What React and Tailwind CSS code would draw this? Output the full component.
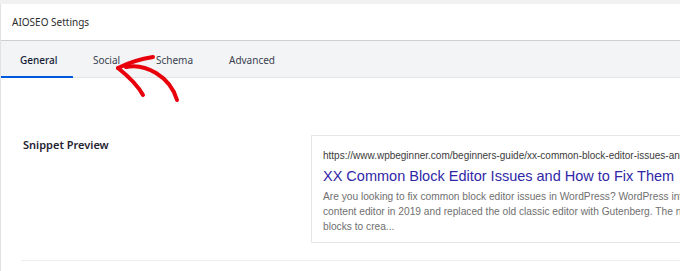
import React from 'react';

const tabs = [
    { label: 'General', cls: 'w-[72px] pl-[19px] font-medium text-[#141b38]' },
    { label: 'Social', cls: 'ml-[20px] w-[63px] text-[#3a3f4f]' },
    { label: 'Schema', cls: 'w-[73px] text-[#3a3f4f]' },
    { label: 'Advanced', cls: 'text-[#3a3f4f]' },
];

const Arrow = () => (
    <svg className="absolute left-[100px] top-[48px] pointer-events-none" width="90" height="60" viewBox="0 0 90 60" fill="none">
        <g stroke="#e8000b" strokeWidth="4" strokeLinecap="round" strokeLinejoin="round">
            <path d="M18 20 C 28 15, 40 11, 53 9" />
            <path d="M18 20 C 28 28, 38 38, 43 47" />
            <path d="M26 19 C 45 15, 70 28, 77 52" />
        </g>
    </svg>
);

export default function App() {
    return (
        <div className="w-[680px] h-[271px] overflow-hidden bg-white font-['Noto_Sans',sans-serif] relative">
            <div className="h-[4px] bg-[#f1f1f1]"></div>
            <div className="border-l border-[#e2e2e2] h-full">
                <div className="h-[36px] flex items-center pl-[11px] text-[10px] text-[#2c2c2c]">AIOSEO Settings</div>
                <div className="h-[38px] pt-[2px] bg-[#f3f4f5] border-t border-[#cfcfcf] border-b border-b-[#e4e4e4] flex">
                    {tabs.map((t, i) => (
                        <div key={t.label} className={`relative shrink-0 h-full flex items-center text-[10px] ${t.cls}`}>
                            {t.label}
                            {i === 0 && <div className="absolute left-0 right-0 bottom-[-1px] h-[2px] bg-[#005ae0]"></div>}
                        </div>
                    ))}
                </div>
                <div className="flex pt-[57px]">
                    <div className="w-[310px] shrink-0 pl-[22px] pt-[2px] text-[11px] font-semibold text-[#1f2433]">Snippet Preview</div>
                    <div className="w-[400px] shrink-0 h-[108px] border border-[#e6e6e6] pl-[11px] pt-[13px] font-['Liberation_Sans',Arial,sans-serif] whitespace-nowrap">
                        <div className="text-[10px] leading-[14px] text-[#3c3c3c]">https://www.wpbeginner.com/beginners-guide/xx-common-block-editor-issues-and-how-to-fix-them/</div>
                        <div className="text-[14.5px] leading-[22px] text-[#2f27a8] mt-[2px]">XX Common Block Editor Issues and How to Fix Them</div>
                        <div className="text-[10.2px] leading-[15px] text-[#707070] mt-[2px]">
                            <div>Are you looking to fix common block editor issues in WordPress? WordPress introduced</div>
                            <div>content editor in 2019 and replaced the old classic editor with Gutenberg. The new editor uses</div>
                            <div>blocks to crea...</div>
                        </div>
                    </div>
                </div>
                <div className="ml-[20px] mt-[17px] h-[1px] bg-[#eeeeee]"></div>
            </div>
            <Arrow />
        </div>
    );
}
